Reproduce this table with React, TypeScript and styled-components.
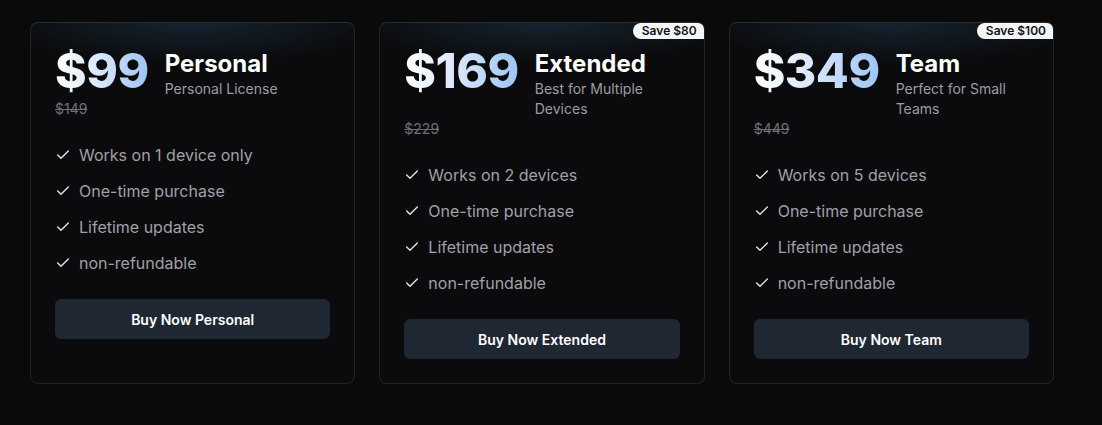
import { createGlobalStyle } from 'styled-components';
import styled from 'styled-components';

const GlobalStyle = createGlobalStyle`
  html, body {
    margin: 0;
    padding: 0;
    background: #0a0a0b;
  }
  body {
    font-family: Inter, "Liberation Sans", sans-serif;
    -webkit-font-smoothing: antialiased;
  }
`;

interface Plan {
  price: string;
  oldPrice: string;
  name: string;
  description: string;
  features: string[];
  badge?: string;
}

const plans: Plan[] = [
  {
    price: '$99',
    oldPrice: '$149',
    name: 'Personal',
    description: 'Personal License',
    features: ['Works on 1 device only', 'One-time purchase', 'Lifetime updates', 'non-refundable'],
  },
  {
    price: '$169',
    oldPrice: '$229',
    name: 'Extended',
    description: 'Best for Multiple Devices',
    features: ['Works on 2 devices', 'One-time purchase', 'Lifetime updates', 'non-refundable'],
    badge: 'Save $80',
  },
  {
    price: '$349',
    oldPrice: '$449',
    name: 'Team',
    description: 'Perfect for Small Teams',
    features: ['Works on 5 devices', 'One-time purchase', 'Lifetime updates', 'non-refundable'],
    badge: 'Save $100',
  },
];

const Page = styled.main`
  min-height: 425px;
  box-sizing: border-box;
  padding: 22px 48px 0 30px;
  background: #0a0a0b;
`;

const Grid = styled.div`
  display: grid;
  grid-template-columns: repeat(3, 1fr);
  column-gap: 24px;
  align-items: stretch;
`;

const Card = styled.section`
  position: relative;
  box-sizing: border-box;
  height: 362px;
  padding: 24px;
  border: 1px solid #232326;
  border-top-color: #2a2d31;
  border-radius: 8px;
  background:
    radial-gradient(ellipse 60% 40px at 50% 0%, rgba(40, 80, 110, 0.35), rgba(40, 80, 110, 0) 100%),
    #0b0b0d;
  display: flex;
  flex-direction: column;
`;

const Badge = styled.span`
  position: absolute;
  top: 0;
  right: 0;
  padding: 1px 7px 2px 9px;
  background: #f4f5f7;
  color: #111318;
  font-size: 12px;
  line-height: 13px;
  font-weight: 600;
  border-radius: 8px 6px 0 8px;
`;

const Header = styled.div`
  display: flex;
  align-items: flex-start;
  gap: 16px;
`;

const Price = styled.div`
  font-size: 48px;
  line-height: 48px;
  font-weight: 800;
  letter-spacing: -0.5px;
  background: linear-gradient(90deg, #ffffff 0%, #dbe8fb 45%, #9cc4f4 100%);
  -webkit-background-clip: text;
  background-clip: text;
  color: transparent;
`;

const TitleBlock = styled.div`
  display: flex;
  flex-direction: column;
  min-width: 0;
`;

const Title = styled.h3`
  margin: 0;
  padding-top: 2px;
  font-size: 24px;
  line-height: 30px;
  font-weight: 700;
  color: #ffffff;
`;

const Subtitle = styled.p`
  margin: 0;
  font-size: 14px;
  line-height: 20px;
  color: #9c9ca4;
`;

const OldPrice = styled.s`
  display: block;
  font-size: 14px;
  line-height: 20px;
  color: #6e6e76;
`;

const Features = styled.ul`
  list-style: none;
  margin: 24px 0 0;
  padding: 0;
  display: flex;
  flex-direction: column;
  gap: 12px;
`;

const Feature = styled.li`
  display: flex;
  align-items: center;
  gap: 8px;
  font-size: 16px;
  line-height: 24px;
  color: #a0a0a7;
`;

const CheckIcon = styled.svg`
  flex: none;
  width: 16px;
  height: 16px;
  color: #e8e8ec;
`;

const BuyButton = styled.button`
  margin-top: 24px;
  height: 40px;
  width: 100%;
  border: none;
  border-radius: 6px;
  background: #1f2733;
  color: #ffffff;
  font-family: inherit;
  font-size: 14px;
  font-weight: 600;
  cursor: pointer;
`;

function Check() {
  return (
    <CheckIcon viewBox="0 0 24 24" fill="none" stroke="currentColor" strokeWidth={2} strokeLinecap="round" strokeLinejoin="round">
      <path d="M20 6 9 17l-5-5" />
    </CheckIcon>
  );
}

function PlanCard({ plan }: { plan: Plan }) {
  return (
    <Card>
      {plan.badge && <Badge>{plan.badge}</Badge>}
      <Header>
        <Price>{plan.price}</Price>
        <TitleBlock>
          <Title>{plan.name}</Title>
          <Subtitle>{plan.description}</Subtitle>
        </TitleBlock>
      </Header>
      <OldPrice>{plan.oldPrice}</OldPrice>
      <Features>
        {plan.features.map((f) => (
          <Feature key={f}>
            <Check />
            {f}
          </Feature>
        ))}
      </Features>
      <BuyButton>Buy Now {plan.name}</BuyButton>
    </Card>
  );
}

export default function App() {
  return (
    <>
      <GlobalStyle />
      <Page>
        <Grid>
          {plans.map((p) => (
            <PlanCard key={p.name} plan={p} />
          ))}
        </Grid>
      </Page>
    </>
  );
}
